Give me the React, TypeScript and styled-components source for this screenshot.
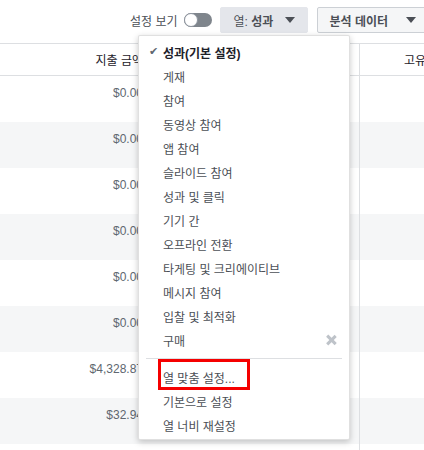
import styled, { createGlobalStyle } from "styled-components";

const GlobalStyle = createGlobalStyle`
  html, body {
    margin: 0;
    padding: 0;
    background: #fff;
    overflow: hidden;
  }
  body {
    font-family: "Liberation Sans", "Noto Sans CJK KR", sans-serif;
    font-size: 12px;
    color: #4b4f56;
  }
`;

const Page = styled.div`
  position: relative;
  width: 424px;
  height: 450px;
  overflow: hidden;
`;

const TopBar = styled.div`
  display: flex;
  align-items: center;
  height: 26px;
  padding: 7px 0 0 130px;
  white-space: nowrap;

  & > * {
    flex: none;
  }
`;

const Label = styled.span`
  color: #4b4f56;
  margin-right: 6px;
`;

const Toggle = styled.span`
  position: relative;
  display: inline-block;
  width: 28px;
  height: 14px;
  border-radius: 7px;
  background: #7f858c;
  margin-right: 8px;

  &::after {
    content: "";
    position: absolute;
    left: 0;
    top: 0;
    width: 12px;
    height: 12px;
    border-radius: 50%;
    background: #fff;
    border: 1px solid #8d949e;
  }
`;

const ToolButton = styled.div<{ $active?: boolean; $width: number }>`
  display: flex;
  align-items: center;
  box-sizing: border-box;
  width: ${(p) => p.$width}px;
  height: 26px;
  padding: 0 12px 0 ${(p) => (p.$active ? 13 : 12)}px;
  margin-right: 9px;
  border-radius: 2px;
  background: ${(p) => (p.$active ? "#e4e6eb" : "#f5f6f7")};
  border: 1px solid ${(p) => (p.$active ? "#e4e6eb" : "#ccd0d5")};
  color: #4b4f56;
  font-size: 12px;

  b {
    font-weight: bold;
    color: #4b4f56;
  }
`;

const Caret = styled.span`
  display: inline-block;
  margin-left: auto;
  width: 0;
  height: 0;
  border-left: 5px solid transparent;
  border-right: 5px solid transparent;
  border-top: 6px solid #4b4f56;
`;

const Table = styled.div`
  display: grid;
  grid-template-columns: 151px 208px 220px;
  margin-top: 10px;
  border-top: 1px solid #dddfe2;
`;

const HeadCell = styled.div<{ $align: "left" | "right"; $divider?: boolean }>`
  box-sizing: border-box;
  height: 32px;
  display: flex;
  align-items: center;
  justify-content: ${(p) => (p.$align === "right" ? "flex-end" : "flex-start")};
  padding: ${(p) => (p.$align === "right" ? "0 8px 0 0" : "0 0 0 44px")};
  border-bottom: 1px solid #dddfe2;
  border-left: ${(p) => (p.$divider ? "1px solid #dddfe2" : "none")};
  color: #1d2129;
  white-space: nowrap;
  overflow: hidden;
`;

const Cell = styled.div<{ $shade: boolean; $divider?: boolean }>`
  box-sizing: border-box;
  height: 46px;
  padding: 10px 8px 0 0;
  text-align: right;
  background: ${(p) => (p.$shade ? "#f5f6f7" : "#fff")};
  border-left: ${(p) => (p.$divider ? "1px solid #dddfe2" : "none")};
  color: #606770;
  white-space: nowrap;
`;

const Menu = styled.div`
  position: absolute;
  left: 138px;
  top: 35px;
  width: 212px;
  height: 405px;
  box-sizing: border-box;
  padding: 4px 0 3px;
  background: #fff;
  border: 1px solid rgba(0, 0, 0, 0.12);
  border-radius: 2px;
  box-shadow: 0 2px 6px rgba(0, 0, 0, 0.22);
`;

const Item = styled.div<{ $bold?: boolean }>`
  position: relative;
  display: flex;
  align-items: center;
  height: 24px;
  padding-left: 24px;
  color: ${(p) => (p.$bold ? "#1d2129" : "#4b4f56")};
  font-weight: ${(p) => (p.$bold ? "bold" : "normal")};
  white-space: nowrap;
`;

const Check = styled.span`
  position: absolute;
  left: 10px;
  top: 5px;
  font-size: 11px;
  color: #606770;
  font-weight: normal;
  font-family: "DejaVu Sans", sans-serif;
`;

const Close = styled.span`
  position: absolute;
  right: 13px;
  top: 7px;
  width: 10px;
  height: 10px;

  &::before,
  &::after {
    content: "";
    position: absolute;
    left: 4px;
    top: -1px;
    width: 2.5px;
    height: 12px;
    background: #bec3c9;
    transform: rotate(45deg);
  }
  &::after {
    transform: rotate(-45deg);
  }
`;

const Separator = styled.div`
  height: 1px;
  margin: 6px 7px 6px 7px;
  background: #dddfe2;
`;

const Highlight = styled.span`
  position: relative;

  &::after {
    content: "";
    position: absolute;
    left: -5px;
    top: -10px;
    width: 92px;
    height: 31px;
    box-sizing: border-box;
    border: 3px solid #f50000;
  }
`;

const presets = [
  "게재",
  "참여",
  "동영상 참여",
  "앱 참여",
  "슬라이드 참여",
  "성과 및 클릭",
  "기기 간",
  "오프라인 전환",
  "타게팅 및 크리에이티브",
  "메시지 참여",
  "입찰 및 최적화",
];

const spend = ["$0.00", "$0.00", "$0.00", "$0.00", "$0.00", "$0.00", "$4,328.87", "$32.94", ""];

export default function App() {
  return (
    <Page>
      <GlobalStyle />
      <TopBar>
        <Label>설정 보기</Label>
        <Toggle />
        <ToolButton $active $width={88}>
          열:&nbsp;<b>성과</b>
          <Caret />
        </ToolButton>
        <ToolButton $width={112}>
          <b>분석 데이터</b>
          <Caret />
        </ToolButton>
      </TopBar>

      <Table>
        <HeadCell $align="right">지출 금액</HeadCell>
        <HeadCell $align="right" />
        <HeadCell $align="left" $divider>
          고유 사용자 수
        </HeadCell>
        {spend.map((v, i) => (
          <>
            <Cell key={`a${i}`} $shade={i % 2 === 1}>
              {v}
            </Cell>
            <Cell key={`b${i}`} $shade={i % 2 === 1} />
            <Cell key={`c${i}`} $shade={i % 2 === 1} $divider />
          </>
        ))}
      </Table>

      <Menu>
        <Item $bold>
          <Check>✔</Check>성과(기본 설정)
        </Item>
        {presets.map((p) => (
          <Item key={p}>{p}</Item>
        ))}
        <Item>
          구매
          <Close />
        </Item>
        <Separator />
        <Item>
          <Highlight>열 맞춤 설정...</Highlight>
        </Item>
        <Item>기본으로 설정</Item>
        <Item>열 너비 재설정</Item>
      </Menu>
    </Page>
  );
}
